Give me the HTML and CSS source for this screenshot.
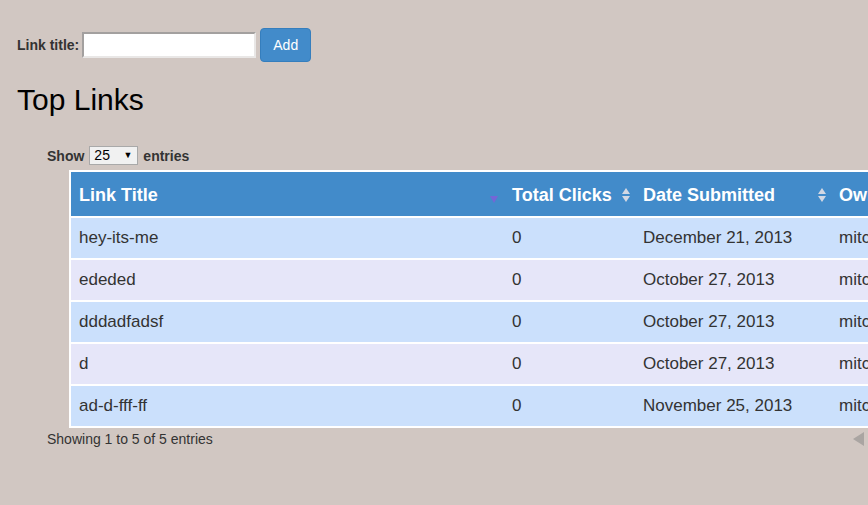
FILE: index.html
```html
<!DOCTYPE html>
<html>
<head>
<meta charset="utf-8">
<title>Top Links</title>
<link rel="stylesheet" href="styles.css">
</head>
<body>
<div class="page">
  <form class="add-form">
    <label class="add-label" for="title">Link title:</label>
    <input class="add-input" id="title" type="text">
    <button class="add-btn" type="button">Add</button>
  </form>
  <h1 class="page-title">Top Links</h1>
  <div class="dt-wrapper">
    <div class="dt-length">
      <span>Show</span>
      <span class="select-box">25<span class="select-arrow">▼</span></span>
      <span>entries</span>
    </div>
    <table class="dt-table">
      <thead>
        <tr>
          <th class="col-title"><div class="th-inner"><span>Link Title</span><span class="sort-desc"></span></div></th>
          <th class="col-clicks"><div class="th-inner"><span>Total Clicks</span><span class="sort-both"></span></div></th>
          <th class="col-date"><div class="th-inner"><span>Date Submitted</span><span class="sort-both"></span></div></th>
          <th class="col-owner"><div class="th-inner"><span>Owner</span><span class="sort-both"></span></div></th>
        </tr>
      </thead>
      <tbody>
        <tr class="odd"><td>hey-its-me</td><td>0</td><td>December 21, 2013</td><td>mitch</td></tr>
        <tr class="even"><td>ededed</td><td>0</td><td>October 27, 2013</td><td>mitch</td></tr>
        <tr class="odd"><td>dddadfadsf</td><td>0</td><td>October 27, 2013</td><td>mitch</td></tr>
        <tr class="even"><td>d</td><td>0</td><td>October 27, 2013</td><td>mitch</td></tr>
        <tr class="odd"><td>ad-d-fff-ff</td><td>0</td><td>November 25, 2013</td><td>mitch</td></tr>
      </tbody>
    </table>
    <div class="dt-footer">
      <div class="dt-info">Showing 1 to 5 of 5 entries</div>
      <div class="dt-paginate"><span class="pg-prev"></span><span class="pg-next"></span></div>
    </div>
  </div>
</div>
</body>
</html>
```
FILE: styles.css
```css
html, body {
  margin: 0;
  padding: 0;
  overflow: hidden;
}
body {
  background: #d1c7c2;
  font-family: "Liberation Sans", Arial, sans-serif;
  color: #333;
}
.page {
  padding: 28px 17px 0 17px;
  width: 1000px;
}
.add-form {
  display: flex;
  align-items: center;
  height: 34px;
  margin: 0;
}
.add-label {
  font-weight: bold;
  font-size: 14px;
  color: #333;
  margin-right: 3px;
}
.add-input {
  box-sizing: border-box;
  width: 174px;
  height: 26px;
  margin: 0;
  padding: 0 4px;
  background: #fff;
  border-style: solid;
  border-width: 2px;
  border-color: #a3a09f #e9e7e6 #e9e7e6 #a3a09f;
}
.add-btn {
  box-sizing: border-box;
  margin-left: 4px;
  width: 51px;
  height: 34px;
  background: #428bca;
  border: 1px solid #357ebd;
  border-radius: 4px;
  color: #fff;
  font-family: "Liberation Sans", Arial, sans-serif;
  font-size: 14px;
  padding: 0;
}
.page-title {
  margin: 21px 0 0 0;
  font-size: 30px;
  line-height: 34px;
  font-weight: normal;
  color: #000;
}
.dt-wrapper {
  padding-left: 30px;
  margin-top: 28px;
}
.dt-length {
  display: flex;
  align-items: center;
  height: 21px;
  font-size: 14px;
  font-weight: bold;
  color: #333;
}
.select-box {
  position: relative;
  box-sizing: border-box;
  width: 49px;
  height: 19px;
  margin: 0 5px 0 5px;
  padding-left: 4px;
  background: #f1f1f1;
  border: 1px solid #a9a9a9;
  font-weight: normal;
  font-size: 14px;
  line-height: 17px;
  color: #000;
}
.select-arrow {
  position: absolute;
  right: 5px;
  top: 0;
  font-size: 9px;
  line-height: 17px;
}
.dt-table {
  margin: 4px 0 0 22px;
  border-collapse: collapse;
  border-top: 2px solid #fff;
  border-left: 2px solid #fff;
  table-layout: fixed;
  width: 862px;
}
.dt-table th, .dt-table td {
  padding: 0 0 0 8px;
  text-align: left;
  border-bottom: 2px solid #fff;
}
.dt-table thead tr {
  background: #428bca;
  height: 46px;
}
.dt-table th {
  color: #fff;
  font-size: 18px;
  font-weight: bold;
  padding-top: 2px;
}
.th-inner {
  display: flex;
  align-items: center;
  justify-content: space-between;
  padding-right: 4px;
}
.col-title { width: 425px; }
.col-clicks { width: 123px; }
.col-date { width: 188px; }
.col-owner { width: 122px; }
.sort-desc {
  width: 0;
  height: 0;
  border-left: 4.5px solid transparent;
  border-right: 4.5px solid transparent;
  border-top: 7px solid #7466d6;
  margin-top: 8px;
  margin-right: 2px;
}
.sort-both {
  position: relative;
  width: 9px;
  height: 14px;
}
.sort-both::before, .sort-both::after {
  content: "";
  position: absolute;
  left: 0;
  border-left: 4.5px solid transparent;
  border-right: 4.5px solid transparent;
}
.sort-both::before {
  top: 0;
  border-bottom: 6px solid #d3d8e4;
}
.sort-both::after {
  bottom: 0;
  border-top: 6px solid #d3d8e4;
}
.dt-table tbody tr {
  height: 42px;
}
.dt-table td {
  font-size: 17px;
  color: #333;
}
.dt-table tr.odd { background: #cbe0fc; }
.dt-table tr.even { background: #e6e6f9; }
.dt-footer {
  display: flex;
  align-items: center;
  width: 884px;
  height: 20px;
  margin-top: 1px;
}
.dt-info {
  font-size: 14px;
  color: #333;
}
.dt-paginate {
  margin-left: auto;
  display: flex;
  gap: 10px;
  width: 78px;
}
.pg-prev {
  width: 0;
  height: 0;
  border-top: 7px solid transparent;
  border-bottom: 7px solid transparent;
  border-right: 11px solid #aaa5a2;
}
.pg-next {
  width: 0;
  height: 0;
  border-top: 7px solid transparent;
  border-bottom: 7px solid transparent;
  border-left: 11px solid #aaa5a2;
}
```
